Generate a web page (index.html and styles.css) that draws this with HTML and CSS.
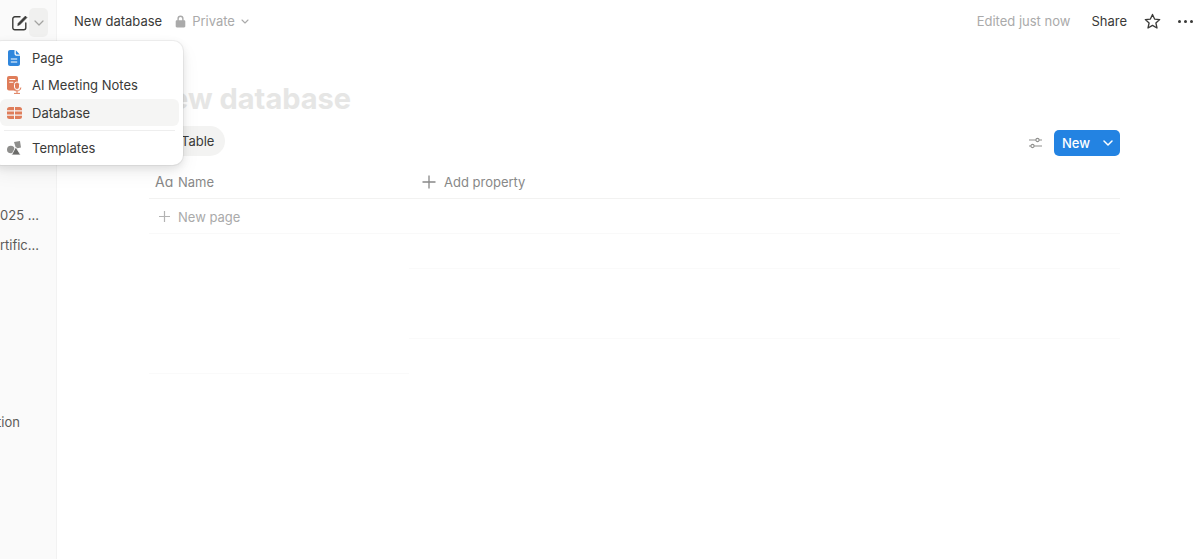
FILE: index.html
```html
<!DOCTYPE html>
<html lang="en">
<head>
  <meta charset="UTF-8" />
  <title>New database</title>
  <meta name="viewport" content="width=device-width, initial-scale=1.0" />
  <link rel="stylesheet" href="styles.css">
</head>
<body>
  <aside class="sidebar">
    <div class="side-top">
      <svg class="compose" width="16" height="16" viewBox="0 0 16 16" fill="none" stroke="#3a3a38" stroke-width="1.4" stroke-linecap="round" stroke-linejoin="round">
        <path d="M8 1.800H2.800A2 2 0 0 0 .8 3.800v9a2 2 0 0 0 2 2h9a2 2 0 0 0 2-2V8"/>
        <path d="M5.800 10.200l.5-2L13.400 1.100l1.500 1.500-7.100 7.100z" fill="#3a3a38" stroke-width=".7"/>
      </svg>
      <span class="side-chevron">
        <svg width="10" height="6" viewBox="0 0 10 6" fill="none" stroke="#a3a3a1" stroke-width="1.200" stroke-linecap="round" stroke-linejoin="round"><path d="M1 1l4 4 4-4"/></svg>
      </span>
    </div>
    <div class="side-item first">Q1 2025 ...</div>
    <div class="side-item">AI Certific...</div>
    <div class="side-item last">Documentation</div>
  </aside>

  <main class="main">
    <header class="topbar">
      <span class="crumb">New database</span>
      <span class="privacy">
        <svg width="11" height="13" viewBox="0 0 11 13" fill="#aaa"><path d="M2.400 5.200V3.700a3.100 3.100 0 0 1 6.200 0v1.500h.5c.7 0 1.200.5 1.200 1.200v4.800c0 .7-.5 1.200-1.200 1.200H1.900c-.7 0-1.200-.5-1.200-1.200V6.400c0-.7.5-1.200 1.200-1.200zm1.400 0h3.400V3.700a1.700 1.700 0 0 0-3.400 0z"/></svg>
        Private
        <svg width="8" height="5" viewBox="0 0 8 5" fill="none" stroke="#aaa" stroke-width="1.100" stroke-linecap="round" stroke-linejoin="round"><path d="M1 1l3 3 3-3"/></svg>
      </span>
      <span class="edited">Edited just now</span>
      <span class="share">Share</span>
      <svg class="star" width="17" height="17" viewBox="0 0 17 17" fill="none" stroke="#3a3a38" stroke-width="1.300" stroke-linejoin="round"><path d="M8.500 1.400l2.100 4.700 5.100.5-3.800 3.400 1.100 5-4.500-2.600L4 15l1.100-5L1.300 6.600l5.100-.5z"/></svg>
      <span class="dots"><i></i><i></i><i></i></span>
    </header>

    <section class="content">
      <h1 class="title">New database</h1>

      <div class="toolbar">
        <span class="tab">
          <svg width="14" height="14" viewBox="0 0 14 14" fill="#55534e"><path d="M2 1h10a1 1 0 0 1 1 1v10a1 1 0 0 1-1 1H2a1 1 0 0 1-1-1V2a1 1 0 0 1 1-1zm0 3.500h10V2H2zm0 1V12h3V5.500zm4 0V12h6V5.500z"/></svg>
          Table
        </span>
        <svg class="filters" width="15" height="12" viewBox="0 0 15 12" fill="none" stroke="#8f8f8d" stroke-width="1.100"><path d="M1 3h7M11 3h3M1 9h2M6 9h8"/><circle cx="9.500" cy="3" r="1.600"/><circle cx="4.500" cy="9" r="1.600"/></svg>
        <span class="new-btn">
          <span class="new-label">New</span>
          <span class="new-arrow">
            <svg width="10" height="6" viewBox="0 0 10 6" fill="none" stroke="#fff" stroke-width="1.500" stroke-linecap="round" stroke-linejoin="round"><path d="M1 1l4 4 4-4"/></svg>
          </span>
        </span>
      </div>

      <div class="row head">
        <div class="cell name">
          <span class="aa">Aɑ</span>
          Name
        </div>
        <div class="cell prop">
          <svg width="14" height="14" viewBox="0 0 14 14" stroke="#888" stroke-width="1.300"><path d="M7 .5v13M.5 7h13"/></svg>
          Add property
        </div>
      </div>
      <div class="row line">
        <div class="cell add">
          <svg width="11" height="11" viewBox="0 0 11 11" stroke="#b3b3b3" stroke-width="1.200"><path d="M5.500 0v11M0 5.500h11"/></svg>
          New page
        </div>
        <div class="cell"></div>
      </div>
      <div class="row right-line"><div class="cell"></div><div class="cell"></div></div>
      <div class="row"><div class="cell"></div><div class="cell"></div></div>
      <div class="row right-line"><div class="cell"></div><div class="cell"></div></div>
      <div class="row left-line"><div class="cell"></div><div class="cell"></div></div>
    </section>
  </main>

  <div class="menu">
    <div class="menu-item">
      <svg class="icon-page" width="12" height="16" viewBox="0 0 12 16"><path fill="#2f86dc" d="M2 0h4.500v3.800c0 1.100.9 2 2 2H12v8.200c0 1.100-.9 2-2 2H2c-1.100 0-2-.9-2-2V2C0 .9.900 0 2 0z"/><path fill="#2f86dc" d="M7.800.3L11.800 4.500H8.600c-.5 0-.8-.4-.8-.8z"/><path stroke="#fff" stroke-width="1.100" d="M2.800 9h6.400M2.800 12h6.400"/></svg>
      Page
    </div>
    <div class="menu-item">
      <svg class="icon-notes" width="15" height="18" viewBox="0 0 15 18"><rect x="0" y="0" width="11" height="14.500" rx="2" fill="#df7d5a"/><path stroke="#fff" stroke-width="1.100" d="M2.300 3.500h6M2.300 6.300h4"/><rect x="7.500" y="6" width="5" height="7.500" rx="2.500" fill="#df7d5a" stroke="#fff" stroke-width="1"/><path fill="none" stroke="#df7d5a" stroke-width="1" d="M6.200 11.500c0 2.300 1.700 3.400 3.800 3.400s3.800-1.100 3.800-3.400M10 15v2M7 17.400h6"/></svg>
      AI Meeting Notes
    </div>
    <div class="menu-item active">
      <svg class="icon-db" width="15" height="12" viewBox="0 0 15 12" fill="#df7d5a"><path d="M2.500 0H7v3.300H0V2.500A2.500 2.500 0 0 1 2.500 0zM8 0h4.500A2.500 2.500 0 0 1 15 2.500v.8H8zM0 4.400h7v3.200H0zM8 4.400h7v3.200H8zM0 8.700h7V12H2.500A2.500 2.500 0 0 1 0 9.500zM8 8.700h7v.8a2.500 2.500 0 0 1-2.500 2.500H8z"/></svg>
      Database
    </div>
    <div class="menu-sep"></div>
    <div class="menu-item">
      <svg class="icon-tpl" width="14" height="14" viewBox="0 0 14 14"><path fill="#8e8e8c" d="M7 1l6-1 1 6.500-5 1z"/><circle cx="3.800" cy="8.500" r="3.800" fill="#8e8e8c"/><path fill="#6b6b69" stroke="#fff" stroke-width=".8" d="M8.800 6l4.900 8H4.500z"/></svg>
      Templates
    </div>
  </div>
</body>
</html>
```
FILE: styles.css
```css
* {
  box-sizing: border-box;
}

html, body {
  height: 100%;
}

body {
  margin: 0;
  display: flex;
  position: relative;
  overflow: hidden;
  font-family: Inter, "Liberation Sans", sans-serif;
  font-size: 13px;
  color: #3a3a38;
  background-color: #fff;
}

/* sidebar, mostly cut off on the left */
.sidebar {
  width: 57px;
  flex-shrink: 0;
  overflow: hidden;
  background-color: #fafafa;
  border-right: 1px solid #f2f2f2;
}

.side-top {
  display: flex;
  align-items: center;
  justify-content: flex-end;
  gap: 1px;
  height: 29px;
  margin-top: 8px;
  padding-right: 8px;
}

.compose {
  margin-top: 1px;
}

.side-chevron {
  display: flex;
  align-items: center;
  justify-content: center;
  width: 19px;
  height: 29px;
  border-radius: 5px;
  background-color: #f0f0ef;
}

.side-item {
  display: flex;
  justify-content: flex-end;
  height: 30px;
  line-height: 30px;
  padding-right: 17px;
  white-space: nowrap;
  color: #5a5a58;
}

.side-item.first {
  margin-top: 163px;
}

.side-item.last {
  margin-top: 147px;
  padding-right: 36px;
}

.main {
  flex: 1;
  min-width: 0;
}

.topbar {
  display: flex;
  align-items: center;
  height: 42px;
  padding-right: 5px;
  padding-left: 17px;
}

.privacy {
  display: flex;
  align-items: center;
  gap: 6px;
  margin-left: 13px;
  color: #aaa;
}

.edited {
  margin-left: auto;
  color: #aaa;
}

.share {
  margin-left: 21px;
}

.star {
  margin-left: 17px;
}

.dots {
  display: flex;
  gap: 3px;
  margin-left: 17px;
  margin-right: 2px;
}

.dots i {
  width: 3px;
  height: 3px;
  border-radius: 50%;
  background-color: #3a3a38;
}

.content {
  padding: 0 80px 0 92px;
}

.title {
  margin: 39px 0 0;
  font-size: 29px;
  line-height: 36px;
  font-weight: 700;
  color: #e6e6e5;
}

.toolbar {
  display: flex;
  align-items: center;
  height: 30px;
  margin-top: 9px;
}

.tab {
  display: flex;
  align-items: center;
  gap: 6px;
  height: 30px;
  padding: 0 11px 0 12px;
  border-radius: 15px;
  background-color: #f3f3f2;
}

.filters {
  margin-top: 3px;
  margin-left: auto;
  margin-right: 11px;
}

.new-btn {
  display: flex;
  align-items: center;
  width: 66px;
  height: 26px;
  margin-top: 4px;
  border-radius: 5px;
  background-color: #2383e2;
  color: #fff;
  font-weight: 500;
}

.new-label {
  flex: 1;
  padding-left: 8px;
}

.new-arrow {
  display: flex;
  align-items: center;
  justify-content: center;
  width: 24px;
}

.row {
  display: flex;
  height: 35px;
}

.cell {
  display: flex;
  align-items: center;
  width: 260px;
}

.cell + .cell {
  flex: 1;
}

.head {
  height: 34px;
  margin-top: 9px;
  border-bottom: 1px solid #f2f2f1;
  color: #888;
}

.name {
  padding-left: 6px;
}

.aa {
  width: 23px;
  font-size: 14px;
  color: #888;
}

.prop {
  gap: 8px;
  padding-left: 13px;
}

.line {
  border-bottom: 1px solid #f9f9f9;
}

.add {
  gap: 8px;
  padding-left: 10px;
  padding-top: 1px;
  color: #aaa;
}

.right-line .cell + .cell,
.left-line .cell:first-child {
  border-bottom: 1px solid #fafafa;
}

/* new-item dropdown over the sidebar and the page */
.menu {
  position: absolute;
  left: -8px;
  top: 41px;
  width: 191px;
  height: 124px;
  padding: 3px 4px 4px 8px;
  border-radius: 10px;
  background-color: #fff;
  box-shadow: 0 0 0 1px rgba(15, 15, 15, .05), 0 3px 8px rgba(15, 15, 15, .1), 0 8px 20px rgba(15, 15, 15, .06);
}

.menu-item {
  display: flex;
  align-items: center;
  height: 27px;
  padding-left: 32px;
  position: relative;
}

.menu-item svg {
  position: absolute;
  left: 7px;
  top: 50%;
  transform: translateY(-50%);
}

.menu-item .icon-page {
  left: 8px;
}

.menu-item.active {
  margin-top: 1px;
  border-radius: 6px;
  background-color: #f5f5f4;
}

.menu-sep {
  height: 1px;
  margin: 4px 4px 3px;
  background-color: #eee;
}
```
